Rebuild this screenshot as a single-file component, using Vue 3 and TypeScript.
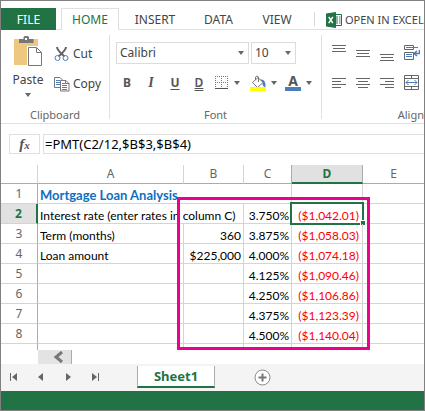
<script setup lang="ts">
import { ref } from 'vue'

interface Row {
  n: number
  a?: string
  b?: string
  c?: string
  d?: string
}

const rows: Row[] = [
  { n: 1, a: 'Mortgage Loan Analysis' },
  { n: 2, a: 'Interest rate (enter rates in column C)', c: '3.750%', d: '($1,042.01)' },
  { n: 3, a: 'Term (months)', b: '360', c: '3.875%', d: '($1,058.03)' },
  { n: 4, a: 'Loan amount', b: '$225,000', c: '4.000%', d: '($1,074.18)' },
  { n: 5, c: '4.125%', d: '($1,090.46)' },
  { n: 6, c: '4.250%', d: '($1,106.86)' },
  { n: 7, c: '4.375%', d: '($1,123.39)' },
  { n: 8, c: '4.500%', d: '($1,140.04)' },
]
const columns = ['A', 'B', 'C', 'D', 'E']
const formula = ref('=PMT(C2/12,$B$3,$B$4)')
const font = ref('Calibri')
const size = ref('10')

const alignIcons = [
  { label: 'Top align', d: 'M0 1.5h14M1 4.5h12M0 7.5h14' },
  { label: 'Middle align', d: 'M0 6.5h14M1 9.5h12M0 12.5h14' },
  { label: 'Bottom align', d: 'M0 10.5h14M1 13.5h12M0 16.5h14' },
]
const justifyIcons = [
  { label: 'Align left', d: 'M0 4.5h14M0 7.5h9M0 10.5h14M0 13.5h9' },
  { label: 'Center', d: 'M0 4.5h14M2 7.5h10M0 10.5h14M2 13.5h10' },
  { label: 'Align right', d: 'M0 4.5h14M5 7.5h9M0 10.5h14M5 13.5h9' },
]
const navIcons = [
  { label: 'First sheet', d: 'M1 1h1v8H1zM8 1v8L3 5z' },
  { label: 'Previous sheet', d: 'M7 1v8L2 5z' },
  { label: 'Next sheet', d: 'M3 1v8l5-4z' },
  { label: 'Last sheet', d: 'M8 1h1v8H8zM2 1v8l5-4z' },
]
</script>

<template>
  <div class="app">
    <nav class="tabs">
      <button class="tab file">FILE</button>
      <button class="tab home">HOME</button>
      <button class="tab insert">INSERT</button>
      <button class="tab data">DATA</button>
      <button class="tab view">VIEW</button>
      <span class="tab-sep"></span>
      <button class="tab open">
        <svg width="16" height="16" viewBox="0 0 16 16" aria-hidden="true">
          <path d="M8 2.500h7.500v11H8" fill="#fff" stroke="#217346" />
          <path d="M10 5h2M13 5h1.500M10 7h2M13 7h1.500M10 9h2M13 9h1.500M10 11h2M13 11h1.500" stroke="#217346" />
          <path d="M0 1.500 10 0v16L0 14.500z" fill="#217346" />
          <path d="m2.800 5 4 6.200M6.900 4.800l-4.200 6.400" stroke="#fff" stroke-width="1.500" />
        </svg>
        <span>OPEN IN EXCEL</span>
      </button>
    </nav>

    <section class="ribbon">
      <div class="group clipboard">
        <div class="group-body clip-body">
          <button class="paste">
            <svg width="30" height="32" viewBox="0 0 30 32" aria-hidden="true">
              <path d="M1 4h24v26H1z" fill="#edc87e" />
              <path d="M6 8V4h4.500V2.500Q10.500 1 12 1h2.500Q16 1 16 2.500V4h4.500v4z" fill="#777" />
              <path d="M12 3h2v2h-2z" fill="#fff" />
              <path d="M14 11h10l6 6v15H14z" fill="#fff" />
              <path d="M15.500 12.500h8l5 5v13h-13zM23.500 12.500v5h5" fill="#fff" stroke="#777" />
            </svg>
            <span>Paste</span>
            <svg width="6" height="4" viewBox="0 0 6 4" aria-hidden="true"><path d="M0 0h6L3 4z" fill="#666" /></svg>
          </button>
          <div class="clip-actions">
            <button class="action">
              <svg width="16" height="16" viewBox="0 0 16 16" fill="none" aria-hidden="true">
                <path d="M3 1q0 3 7.500 9.500M12 1q0 3-7.500 9.500" stroke="#666" stroke-width="2" />
                <circle cx="3.500" cy="12" r="2.500" stroke="#4a7ebb" />
                <circle cx="11.500" cy="12" r="2.500" stroke="#4a7ebb" />
              </svg>
              <span>Cut</span>
            </button>
            <button class="action">
              <svg width="16" height="16" viewBox="0 0 16 16" fill="#fff" aria-hidden="true">
                <path d="M.5 1.500H6l2.500 2.500v7.500h-8z" stroke="#777" />
                <path d="M2 4.500h4M2 6.500h4M2 8.500h4" stroke="#4a7ebb" />
                <path d="M6.500 4.500H12l3 3v7.500H6.500zM11.500 4.500v3H15" stroke="#777" />
                <path d="M8 7.500h3M8 9.500h5M8 11.500h5M8 13.500h5" stroke="#4a7ebb" />
              </svg>
              <span>Copy</span>
            </button>
          </div>
        </div>
        <div class="group-title">Clipboard</div>
      </div>

      <div class="group font-group">
        <div class="group-body">
          <div class="selects">
            <label class="pick family">
              <select v-model="font" aria-label="Font"><option>Calibri</option></select>
              <svg width="6" height="4" viewBox="0 0 6 4" aria-hidden="true"><path d="M0 0h6L3 4z" fill="#666" /></svg>
            </label>
            <label class="pick size">
              <select v-model="size" aria-label="Font size"><option>10</option></select>
              <svg width="6" height="4" viewBox="0 0 6 4" aria-hidden="true"><path d="M0 0h6L3 4z" fill="#666" /></svg>
            </label>
          </div>
          <div class="formats">
            <button class="fmt bold">B</button>
            <button class="fmt italic">I</button>
            <button class="fmt under">U</button>
            <button class="fmt double">D</button>
            <button class="drop" aria-label="Borders">
              <svg width="14" height="16" viewBox="0 0 14 16" aria-hidden="true">
                <path d="M0 1.500h13M0 7.500h13M.5 1v12M6.500 1v12M12.500 1v12" stroke="#777" stroke-dasharray="1 1" />
                <path d="M0 13.500h13" stroke="#555" />
              </svg>
              <svg width="6" height="4" viewBox="0 0 6 4" aria-hidden="true"><path d="M0 0h6L3 4z" fill="#666" /></svg>
            </button>
            <button class="drop" aria-label="Fill color">
              <svg width="16" height="16" viewBox="0 0 16 16" aria-hidden="true">
                <path d="M10 4.500q6-1 5.500 7.500-3 0-3-4z" fill="#4a7ebb" />
                <path d="m8 2.500 5 5-5.500 5-5-5z" fill="#fff" stroke="#777" />
                <path d="M5.500 5V2Q7 0 8.500 2v5" fill="none" stroke="#777" />
                <path d="M0 12h16v4H0z" fill="#ff0" />
              </svg>
              <svg width="6" height="4" viewBox="0 0 6 4" aria-hidden="true"><path d="M0 0h6L3 4z" fill="#666" /></svg>
            </button>
            <button class="drop" aria-label="Font color">
              <span class="letter">A</span>
              <svg width="6" height="4" viewBox="0 0 6 4" aria-hidden="true"><path d="M0 0h6L3 4z" fill="#666" /></svg>
            </button>
          </div>
        </div>
        <div class="group-title">Font</div>
      </div>

      <div class="group align-group">
        <div class="group-body align-body">
          <div class="align-row">
            <button v-for="i in alignIcons" :key="i.label" :aria-label="i.label">
              <svg width="14" height="18" viewBox="0 0 14 18"><path :d="i.d" stroke="#666" /></svg>
            </button>
            <button aria-label="Wrap text">
              <svg width="16" height="18" viewBox="0 0 16 18" fill="none">
                <path d="M.5 1.500h9v4h-9zM.5 8.500h9v7h-9z" stroke="#666" />
                <path d="M2 3.500h12M2 10.500h6M2 12.500h6" stroke="#4a7ebb" />
                <path d="M15.500 6v3.500H10M13 7l-3 2.500 3 2.500" stroke="#4a7ebb" stroke-width="1.500" />
              </svg>
            </button>
          </div>
          <div class="align-row">
            <button v-for="i in justifyIcons" :key="i.label" :aria-label="i.label">
              <svg width="14" height="18" viewBox="0 0 14 18"><path :d="i.d" stroke="#666" /></svg>
            </button>
            <button aria-label="Merge cells">
              <svg width="16" height="18" viewBox="0 0 16 18" fill="none">
                <path d="M.5 1.500h14v14H.5zM.5 4.500h14M.5 12.500h14M7.500 1v3M7.500 13v3" stroke="#666" />
                <path d="M2 8.500h11M4.500 6 2 8.500 4.500 11M10.500 6 13 8.500 10.500 11" stroke="#4a7ebb" />
              </svg>
            </button>
          </div>
        </div>
        <div class="group-title">Alignment</div>
      </div>
    </section>

    <div class="formula-bar">
      <button class="fx" aria-label="Insert function"><i>f</i><i class="sub">x</i></button>
      <input v-model="formula" aria-label="Formula" spellcheck="false" />
    </div>

    <main class="grid">
      <table>
        <colgroup>
          <col class="w-head" /><col class="w-a" /><col class="w-b" /><col class="w-c" /><col class="w-d" /><col />
        </colgroup>
        <thead>
          <tr>
            <th></th>
            <th v-for="c in columns" :key="c" scope="col" :class="{ before: c === 'C', on: c === 'D' }">{{ c }}</th>
          </tr>
        </thead>
        <tbody>
          <tr v-for="r in rows" :key="r.n" :class="{ current: r.n === 2 }">
            <th scope="row">{{ r.n }}</th>
            <td v-if="r.n === 1" colspan="3" class="title">{{ r.a }}</td>
            <template v-else>
              <td v-if="r.n === 2" colspan="2">{{ r.a }}</td>
              <template v-else>
                <td>{{ r.a }}</td>
                <td class="num">{{ r.b }}</td>
              </template>
              <td class="num">{{ r.c }}</td>
            </template>
            <td class="num neg">
              {{ r.d }}
              <span v-if="r.n === 2" class="selection"><span class="handle"></span></span>
            </td>
            <td class="last"></td>
          </tr>
          <tr class="stub">
            <th></th><td></td><td></td><td></td><td></td><td class="last"></td>
          </tr>
        </tbody>
      </table>
      <div class="highlight"></div>
    </main>

    <div class="scroll">
      <button aria-label="Scroll left">
        <svg width="12" height="12" viewBox="0 0 12 12"><path d="M10 1 4 6l6 5" fill="none" stroke="#777" stroke-width="3" /></svg>
      </button>
    </div>

    <footer class="sheets">
      <div class="nav">
        <button v-for="i in navIcons" :key="i.label" :aria-label="i.label">
          <svg width="10" height="10" viewBox="0 0 10 10"><path :d="i.d" fill="#666" /></svg>
        </button>
      </div>
      <button class="sheet">Sheet1</button>
      <button class="add" aria-label="New sheet">
        <svg width="17" height="17" viewBox="0 0 17 17" fill="none">
          <circle cx="8.500" cy="8.500" r="7.500" stroke="#888" fill="#fff" />
          <path d="M8.500 4.500v8M4.500 8.500h8" stroke="#777" stroke-width="2" />
        </svg>
      </button>
    </footer>
    <div class="status"></div>
  </div>
</template>

<style>
body {
  background: #fff;
}
</style>

<style scoped>
.app {
  box-sizing: border-box;
  border: 1px solid #808080;
  overflow: hidden;
  background: #fff;
  color: #444;
  font: 12px/16px "Noto Sans", "Open Sans", sans-serif;
}
button {
  font: inherit;
  color: inherit;
  background: none;
  border: 0;
  padding: 0;
  margin: 0;
}
svg {
  display: block;
  flex: none;
}
.tabs {
  display: flex;
  height: 22px;
  padding-top: 7px;
  overflow: hidden;
  background: linear-gradient(#e0e0e0, #e0e0e0) bottom / 100% 1px no-repeat;
}
.tab {
  flex: none;
  height: 22px;
  padding-top: 1px;
}
.file {
  width: 55px;
  background: #217346;
  color: #fff;
}
.home {
  box-sizing: border-box;
  width: 58px;
  margin-left: 5px;
  border: 1px solid #e0e0e0;
  border-bottom: 0;
  background: #fff;
  color: #217346;
}
.insert {
  width: 72px;
}
.data {
  width: 55px;
}
.view {
  width: 62px;
}
.tab-sep {
  flex: none;
  width: 1px;
  height: 14px;
  margin: 4px 11px 0 6px;
  background: #d8d8d8;
}
.open {
  display: flex;
  align-items: center;
  gap: 3px;
  font-size: 11px;
  white-space: nowrap;
}
.ribbon {
  display: flex;
  height: 93px;
  overflow: hidden;
  border-bottom: 1px solid #e0e0e0;
}
.group {
  box-sizing: border-box;
  flex: none;
  display: flex;
  flex-direction: column;
  height: 84px;
  margin-top: 5px;
  border-right: 1px solid #e0e0e0;
}
.group-body {
  flex: 1;
}
.group-title {
  height: 13px;
  line-height: 17px;
  font-size: 11px;
  text-align: center;
  color: #666;
}
.clipboard {
  width: 109px;
}
.clip-body {
  display: flex;
  padding-left: 12px;
}
.paste {
  display: flex;
  flex-direction: column;
  align-items: center;
  width: 30px;
  height: 64px;
}
.paste span {
  line-height: 16px;
  margin: 5px 0;
}
.clip-actions {
  display: flex;
  flex-direction: column;
  gap: 14px;
  padding: 11px 0 0 11px;
}
.action {
  display: flex;
  align-items: center;
  gap: 3px;
  height: 16px;
}
.font-group {
  width: 212px;
}
.selects {
  display: flex;
  gap: 2px;
  padding: 7px 0 0 6px;
}
.pick {
  box-sizing: border-box;
  display: flex;
  align-items: center;
  height: 22px;
  padding-right: 4px;
  border: 1px solid #dcdcdc;
}
.family {
  width: 133px;
}
.size {
  width: 45px;
}
select {
  flex: 1;
  min-width: 0;
  height: 20px;
  padding: 0 0 0 3px;
  border: 0;
  appearance: none;
  background: none;
  font: inherit;
  color: #444;
}
.formats {
  display: flex;
  align-items: center;
  padding: 9px 0 0 5px;
  height: 20px;
}
.fmt {
  width: 24px;
  height: 16px;
  color: #555;
  font-weight: 700;
}
.italic {
  font-family: "Liberation Serif", serif;
  font-style: italic;
  font-size: 14px;
}
.under {
  text-decoration: underline;
  text-underline-offset: 2px;
}
.double {
  font-weight: 600;
  text-decoration: underline double;
}
.drop {
  display: flex;
  align-items: center;
  gap: 5px;
  width: 35px;
  height: 16px;
  padding-left: 4px;
}
.letter {
  box-sizing: border-box;
  width: 16px;
  height: 16px;
  border-bottom: 4px solid #4a7ebb;
  font-size: 14px;
  line-height: 11px;
  font-weight: 700;
  text-align: center;
  color: #555;
}
.align-group {
  width: 206px;
}
.align-body {
  display: flex;
  flex-direction: column;
  gap: 12px;
  padding: 9px 0 0 10px;
}
.align-row {
  display: flex;
  gap: 10px;
}
.formula-bar {
  display: flex;
  gap: 3px;
  padding: 10px 0 11px 8px;
}
.fx {
  flex: none;
  box-sizing: border-box;
  width: 31px;
  height: 20px;
  border: 1px solid #e0e0e0;
  font: 700 15px/16px "Liberation Serif", serif;
  color: #555;
}
.sub {
  font-size: 11px;
}
input {
  box-sizing: border-box;
  flex: 1;
  min-width: 0;
  height: 20px;
  padding: 0 0 0 1px;
  border: 1px solid #e0e0e0;
  border-right: 0;
  outline: 0;
  font: 13px/18px "Noto Sans", sans-serif;
  color: #000;
}
.grid {
  position: relative;
}
table {
  width: 100%;
  table-layout: fixed;
  border-collapse: separate;
  border-spacing: 0;
  color: #000;
  font: 12px/16px "Lato", "Noto Sans", sans-serif;
}
.w-head {
  width: 37px;
}
.w-a {
  width: 146px;
}
.w-b {
  width: 60px;
}
.w-c {
  width: 48px;
}
.w-d {
  width: 71px;
}
th,
td {
  box-sizing: border-box;
  height: 20px;
  padding: 0;
  border-right: 1px solid #d4d4d4;
  border-bottom: 1px solid #d4d4d4;
  white-space: nowrap;
}
th {
  font-family: "Noto Sans", sans-serif;
  font-weight: 400;
  color: #666;
  text-align: center;
}
thead th {
  height: 19px;
  border-bottom-color: #ababab;
}
thead th:last-child,
.last {
  border-right: 0;
}
thead .before {
  border-right-color: #ababab;
}
thead .on {
  border-right-color: #ababab;
  border-bottom: 2px solid #217346;
  background: #e1e1e1;
  color: #217346;
  font-weight: 700;
}
tbody th {
  border-right-color: #ababab;
}
.current th {
  border-right: 2px solid #217346;
  background: #e1e1e1;
  color: #217346;
  font-weight: 700;
}
td {
  padding: 5px 0 0 2px;
  line-height: 14px;
}
.title {
  padding-top: 3px;
  line-height: 16px;
  color: #0f6fc0;
  font-size: 13px;
  font-weight: 700;
}
.num {
  padding-right: 2px;
  text-align: right;
}
.neg {
  position: relative;
  padding-right: 3px;
  color: #f00;
}
.selection {
  position: absolute;
  inset: -2px -2px -2px -2px;
  border: 2px solid #217346;
}
.handle {
  position: absolute;
  right: -4px;
  bottom: -3px;
  width: 4px;
  height: 4px;
  border: 1px solid #fff;
  background: #217346;
}
.stub th,
.stub td {
  height: 6px;
  padding: 0;
  border-bottom: 0;
}
.highlight {
  position: absolute;
  box-sizing: border-box;
  left: 176px;
  top: 32px;
  width: 193px;
  height: 153px;
  border: 3px solid #ec008c;
}
.scroll {
  display: flex;
  padding-left: 37px;
  height: 14px;
}
.scroll button {
  box-sizing: border-box;
  display: flex;
  align-items: center;
  justify-content: center;
  width: 34px;
  padding-left: 6px;
  border-right: 1px solid #ababab;
  background: #e3e3e3;
}
.sheets {
  display: flex;
  height: 27px;
  background: #f4f4f4;
}
.nav {
  display: flex;
  gap: 17px;
  align-items: center;
  width: 128px;
  padding: 0 0 2px 8px;
}
.sheet {
  box-sizing: border-box;
  width: 78px;
  height: 22px;
  margin-top: 2px;
  border: 1px solid #ababab;
  border-top: 0;
  border-bottom: 2px solid #217346;
  background: #fff;
  color: #217346;
  font-size: 13px;
  font-weight: 700;
}
.add {
  margin-left: 39px;
}
.status {
  height: 19px;
  background: #217346;
}
</style>
